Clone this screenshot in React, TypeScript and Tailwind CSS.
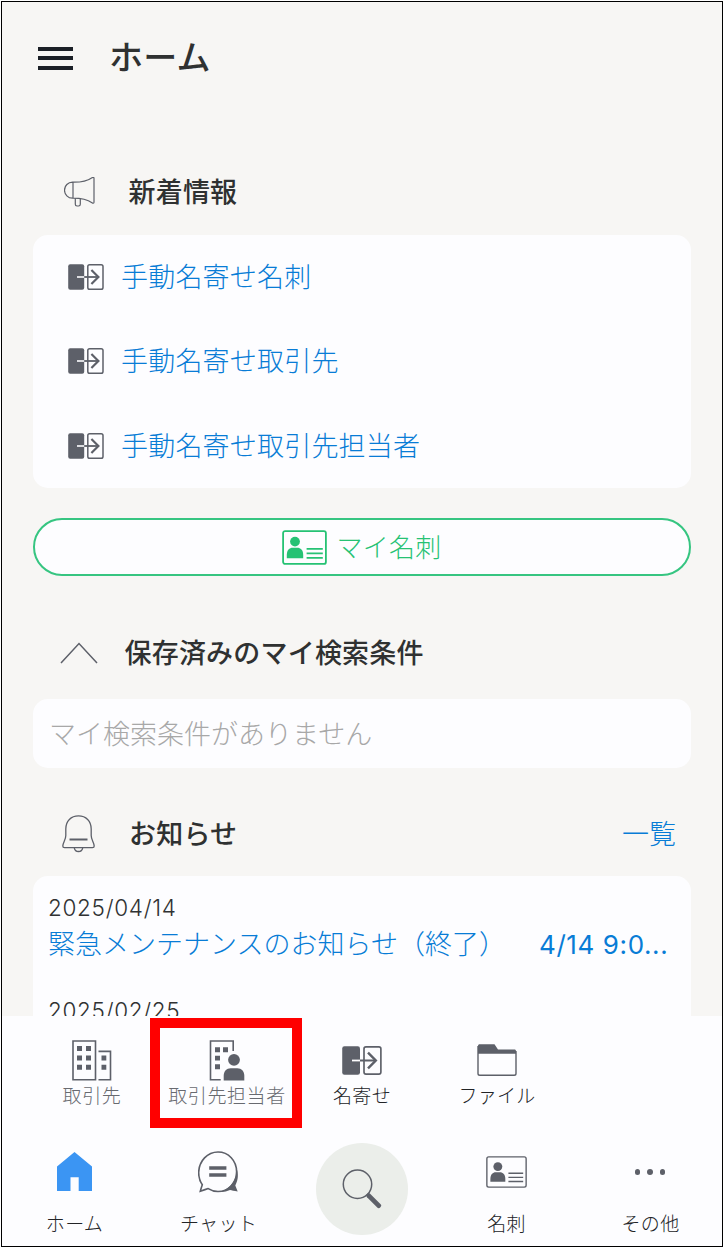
import type { ReactNode } from "react";

const INK = "#5d6069";

function MergeIcon({ width, height }: { width: number; height: number }) {
  return (
    <svg width={width} height={height} viewBox="0 0 36 26" preserveAspectRatio="none" fill="none" className="shrink-0">
      <rect x="0.2" y="0.2" width="16" height="25.6" rx="2" fill={INK} />
      <rect x="19.8" y="0.8" width="15.2" height="24.4" rx="1.8" stroke={INK} strokeWidth="1.5" />
      <path d="M9 13h7.2" stroke="#fdfdff" strokeWidth="1.6" />
      <path d="M16.2 13H30" stroke={INK} strokeWidth="1.8" />
      <path d="M23.4 6l7 7-7 7" stroke={INK} strokeWidth="2.2" />
    </svg>
  );
}

function CardIcon({ color, width, height, stroke }: { color: string; width: number; height: number; stroke: number }) {
  return (
    <svg width={width} height={height} viewBox="0 0 45 35" preserveAspectRatio="none" fill="none" className="shrink-0">
      <rect x={stroke / 2 + 0.2} y={stroke / 2 + 0.2} width={44.6 - stroke} height={34.6 - stroke} rx="2" stroke={color} strokeWidth={stroke} />
      <circle cx="13" cy="11.6" r="4.9" fill={color} />
      <path d="M4.800 28.200v-3.400c0-4.400 2.600-7 6-7h4.400c3.400 0 6 2.600 6 7v3.400z" fill={color} />
      <path d="M24.600 18.900h16.200M24.600 23.400h16.200M24.600 27.900h16.200" stroke={color} strokeWidth={stroke} />
    </svg>
  );
}

function MegaphoneIcon() {
  return (
    <svg width="32" height="30" viewBox="0 0 32 30" fill="none" stroke={INK} strokeWidth="1.200" className="shrink-0">
      <path d="M9 5.200H8.500a8 8 0 0 0 0 16H9zM9 5.200c9.500.2 14.500-1.400 19-4.500.9-.6 2-.6 2 .6v24c0 1.200-1.200 1.100-2 .5C23.500 22.600 18.500 21.200 9 21.200" />
      <path d="M11.300 21.300v6c0 1.100.6 1.700 1.700 1.700h1.600c1.100 0 1.700-.6 1.700-1.700v-5.700" />
    </svg>
  );
}

function BellIcon() {
  return (
    <svg width="34" height="38" viewBox="0 0 34 38" fill="none" stroke={INK} strokeWidth="1.300" className="shrink-0">
      <path d="M3.800 20.500V14C3.800 6 9 .9 16.500.9S29.200 6 29.200 14v6.500c0 4.500 3 7.500 3 10.500 0 1.200-.6 1.700-1.700 1.700h-28C1.400 32.700.8 32.200.8 31c0-3 3-6 3-10.500z" />
      <path d="M7.500 24.500h18" strokeWidth="2" />
      <path d="M12.300 32.800c.4 2.400 2 3.700 4.200 3.700s3.800-1.300 4.200-3.700" />
    </svg>
  );
}

function BuildingIcon() {
  return (
    <svg width="40" height="41" viewBox="0 0 40 41" fill="none" className="shrink-0">
      <path d="M1 1h22.500v38.700H1zM26.500 11.400h12v28.300h-12" stroke={INK} strokeWidth="1.600" />
      <path d="M5 6h5v5H5zM14 6h5v5h-5zM5 15.500h5v5H5zM14 15.500h5v5h-5zM5 24.700h5v5H5zM14 24.700h5v5h-5zM29.500 15.500h4.800v5h-4.800zM29.500 24.700h4.800v5h-4.800z" fill={INK} />
    </svg>
  );
}

function ContactIcon() {
  return (
    <svg width="36" height="41" viewBox="0 0 36 41" fill="none" className="shrink-0">
      <path d="M24.200 11V1H1.500v38.700h10.200" stroke={INK} strokeWidth="1.600" />
      <path d="M6 7.300h5v4.900H6zM14 7.300h5v4.900h-5zM6 15.700h5v4.900H6zM6 24.300h5v4.900H6z" fill={INK} />
      <circle cx="25" cy="19.800" r="5.900" fill={INK} />
      <path d="M14.700 40.500v-4.500c0-4.700 2.800-7.700 7-7.700h6.600c4.200 0 7 3 7 7.700v4.500z" fill={INK} />
    </svg>
  );
}

function FolderIcon() {
  return (
    <svg width="40" height="34" viewBox="0 0 40 34" fill="none" className="shrink-0">
      <path d="M1 10.700V3c0-1.200.6-1.800 1.800-1.800h14.700L21 6.400h16.400c1 0 1.600.6 1.600 1.600v2.700z" fill={INK} />
      <path d="M1 3v27.500c0 1.200.6 1.800 1.800 1.800h34.400c1.200 0 1.800-.6 1.800-1.800V8" stroke={INK} strokeWidth="1.400" />
    </svg>
  );
}

function HomeIcon() {
  return (
    <svg width="35" height="39" viewBox="0 0 35 39" className="mb-px shrink-0">
      <path d="M17.500 0L35 14.400V39H21.700V25.300h-8.200V39H0V14.400z" fill="#3b95f3" />
    </svg>
  );
}

function ChatIcon() {
  return (
    <svg width="41" height="42" viewBox="0 0 41 42" fill="none" className="shrink-0">
      <path d="M38.500 17c2.200 6 1.800 12-1.200 17.400L39.700 40.600c-3.700-.6-6-1-7.700-1.500-3.500 1.700-7.500 2.200-11 1.800 11.500-2.400 18-11.900 17.500-23.900z" fill={INK} />
      <path d="M2.300 40.300c.8-3 1.300-4.500 2-6.500-2.600-3.800-3.700-8-3.600-12.500C1 9.800 9.500 1 20 1s18.600 8.700 18.600 19.700S30.500 40.500 20 40.500c-3.600 0-7-1.100-9.800-2.900-2.500.9-4.900 1.700-7.900 2.700z" stroke={INK} strokeWidth="1.600" />
      <path d="M11.200 17h17.200M11.200 24h17.200" stroke={INK} strokeWidth="3.600" />
    </svg>
  );
}

function SearchIcon() {
  return (
    <svg width="40" height="40" viewBox="0 0 40 40" fill="none" stroke={INK} className="shrink-0">
      <circle cx="15.500" cy="15.300" r="14.200" strokeWidth="1.500" />
      <path d="M26.700 26.600l10 10" strokeWidth="4.800" strokeLinecap="round" />
    </svg>
  );
}

function Menu() {
  return (
    <div className="flex w-[35px] flex-col gap-[5.500px]">
      <div className="h-1 bg-[#1b1f26]" />
      <div className="h-1 bg-[#1b1f26]" />
      <div className="h-1 bg-[#1b1f26]" />
    </div>
  );
}

function MergeRow({ children }: { children: ReactNode }) {
  return (
    <li className="flex h-[84.400px] items-center gap-[17px] pl-[35px]">
      <MergeIcon width={36} height={26} />
      <a className="pb-[2px] text-[27px] leading-[40px] tracking-[0.200px] text-[#087cd6]">{children}</a>
    </li>
  );
}

function Tab({ icon, label, muted, wide }: { icon: ReactNode; label: string; muted?: boolean; wide?: boolean }) {
  return (
    <div className={wide ? "flex w-36 flex-col items-center gap-[16px]" : "flex w-[135px] flex-col items-center"}>
      <div className="flex h-[42px] items-center">{icon}</div>
      <span className={muted ? "pl-px text-[19px] leading-7 tracking-[0.600px] whitespace-nowrap text-[#686a70]" : "pl-px text-[19px] leading-7 tracking-[0.300px] whitespace-nowrap text-[#222427]"}>
        {label}
      </span>
    </div>
  );
}

export default function App() {
  return (
    <div className="h-[1247px] w-[723px] bg-white pt-px pl-px font-['Noto_Sans_CJK_JP',sans-serif] font-light">
      <div className="relative flex h-[1246px] w-[722px] flex-col overflow-hidden border border-black bg-[#f7f6f4]">
        <main className="flex h-[1014px] shrink-0 flex-col overflow-hidden px-[31px]">
          <header className="flex h-[112px] shrink-0 items-center gap-[36px] pl-[5px]">
            <Menu />
            <h1 className="pb-[5px] text-[34px] leading-[48px] font-medium tracking-[0.200px] text-[#2f3131]">ホーム</h1>
          </header>

          <div className="mt-[58px] flex h-10 shrink-0 items-center gap-[32.500px] pl-[31px]">
            <MegaphoneIcon />
            <h2 className="pb-[2px] text-[27px] leading-10 font-medium tracking-[0.200px] text-[#2f3131]">新着情報</h2>
          </div>
          <ul className="mt-[23px] flex h-[253px] shrink-0 flex-col rounded-[15px] bg-[#fdfdff]">
            <MergeRow>手動名寄せ名刺</MergeRow>
            <MergeRow>手動名寄せ取引先</MergeRow>
            <MergeRow>手動名寄せ取引先担当者</MergeRow>
          </ul>

          <button className="mt-[30px] flex h-[58px] shrink-0 items-center justify-center gap-[9px] rounded-full border-2 border-[#36c581] bg-[#fdfdff] text-[#26c274]">
            <CardIcon color="#26c274" width={45} height={35} stroke={1.800} />
            <span className="pb-[2px] text-[26px] leading-10 tracking-[0.300px]">マイ名刺</span>
          </button>

          <div className="mt-[57px] flex h-10 shrink-0 items-center gap-[27px] pl-[26.500px]">
            <svg width="38" height="22" viewBox="0 0 38 22" fill="none" className="shrink-0">
              <path d="M1 21L19 1.500 37 21" stroke={INK} strokeWidth="1.500" />
            </svg>
            <h2 className="pb-[2px] text-[27px] leading-10 font-medium tracking-[0.200px] text-[#2f3131]">保存済みのマイ検索条件</h2>
          </div>
          <div className="mt-[26px] flex h-[69px] shrink-0 items-center rounded-[15px] bg-[#fdfdff] pb-[2px] pl-4 text-[27px] leading-10 text-[#a8a8a8]">
            マイ検索条件がありません
          </div>

          <div className="mt-[46px] flex h-10 shrink-0 items-center gap-[33px] pr-[15px] pl-[29px]">
            <BellIcon />
            <h2 className="flex-1 pb-[2px] text-[27px] leading-10 font-medium tracking-[0.200px] text-[#2f3131]">お知らせ</h2>
            <a className="pb-[2px] text-[27px] leading-10 text-[#087cd6]">一覧</a>
          </div>
          <div className="mt-[22px] flex h-[200px] shrink-0 flex-col rounded-t-[15px] bg-[#fdfdff] px-4 pt-4">
            <time className="-ml-px font-['Inter',sans-serif] text-[22.500px] leading-8 font-[360] tracking-[0.700px] text-[#303233]">2025/04/14</time>
            <a className="-ml-px flex h-10 items-center pb-[2px] text-[27px] whitespace-pre text-[#087cd6]">
              <span className="w-[491px]">緊急メンテナンスのお知らせ（終了）</span>
              <span className="pt-[2px] font-['Inter',sans-serif] text-[26px] font-[370] tracking-[0.600px]">4/14 9:0...</span>
            </a>
            <time className="mt-[31px] -ml-px font-['Inter',sans-serif] text-[22.500px] leading-8 font-[360] tracking-[0.700px] text-[#303233]">2025/02/25</time>
          </div>
        </main>

        <nav className="h-[230px] shrink-0 bg-[#fdfdff]">
          <div className="flex h-[126px] pt-[23px] pl-[22px]">
            <Tab icon={<BuildingIcon />} label="取引先" muted />
            <Tab icon={<ContactIcon />} label="取引先担当者" muted />
            <Tab icon={<MergeIcon width={40} height={29} />} label="名寄せ" />
            <Tab icon={<FolderIcon />} label="ファイル" />
          </div>
          <div className="flex h-[104px] pt-[9px]">
            <Tab wide icon={<HomeIcon />} label="ホーム" />
            <Tab wide icon={<ChatIcon />} label="チャット" />
            <div className="flex w-36 justify-center">
              <div className="-mt-2 flex size-[92px] items-center justify-center rounded-full bg-[#ebeeea]">
                <SearchIcon />
              </div>
            </div>
            <Tab wide icon={<CardIcon color={INK} width={41} height={32} stroke={1.500} />} label="名刺" />
            <Tab
              wide
              label="その他"
              icon={
                <div className="flex gap-[7px]">
                  <i className="size-[5.500px] rounded-full bg-[#5d6069]" />
                  <i className="size-[5.500px] rounded-full bg-[#5d6069]" />
                  <i className="size-[5.500px] rounded-full bg-[#5d6069]" />
                </div>
              }
            />
          </div>
        </nav>
        <div className="absolute top-[1016px] left-[148px] h-[110px] w-[152px] border-[10px] border-[#ff0000]" />
      </div>
    </div>
  );
}
